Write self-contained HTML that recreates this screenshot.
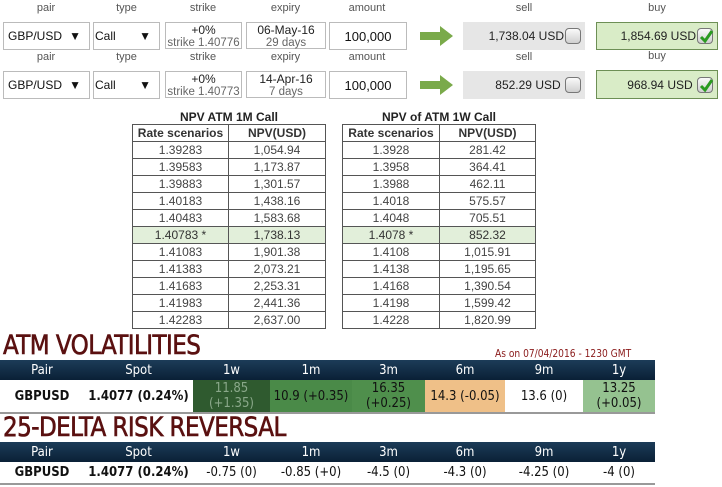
<!DOCTYPE html>
<html><head><meta charset="utf-8"><style>
*{box-sizing:border-box;margin:0;padding:0}
body{width:722px;height:487px;background:#fff;font-family:"Liberation Sans",Arial,sans-serif;position:relative;overflow:hidden;color:#222}
.a{position:absolute}
.lbl{position:absolute;font-size:11px;color:#555;text-align:center}
.box{position:absolute;border:1px solid #bbb;background:#fff;font-size:12px}
.sel{display:flex;align-items:center;justify-content:space-between;padding:0 8px 0 4px;color:#111}
.two{text-align:center;font-size:12px;line-height:12px;padding-top:1px;color:#222;white-space:nowrap}
.two span{color:#666;font-size:11.5px}
.amt{display:flex;align-items:center;justify-content:center;font-size:13px;color:#111}
.sell{position:absolute;background:#e6e6e6;font-size:12px;color:#222;display:flex;align-items:center;justify-content:flex-end;padding-right:4px}
.buy{position:absolute;background:#d9ecc7;border:1px solid #6d8f55;font-size:12px;color:#222;display:flex;align-items:center;justify-content:flex-end;padding-right:4px}
.cb{display:inline-block;width:16px;height:16px;border:1px solid #777;border-radius:4px;background:linear-gradient(#fafafa,#cfcfcf);margin-left:1px;position:relative}
.arrow{position:absolute;width:34px;height:20px}
table.t{position:absolute;border-collapse:collapse;font-size:12px;color:#444}
table.t td{border:1px solid #555;height:17px;text-align:center;padding:0;line-height:15px}
table.t tr.h td{font-weight:bold;color:#333;font-size:12px}
table.t tr.g td{background:#e2efda;color:#333}
.tt{position:absolute;font-size:12px;font-weight:bold;color:#222;text-align:center}
.big{position:absolute;font-family:"DejaVu Sans Condensed","Liberation Sans Narrow",sans-serif;color:#5a1010;font-size:27px;letter-spacing:-0.6px;line-height:28px;transform:scaleX(0.95);transform-origin:left;-webkit-text-stroke:0.6px #5a1010}
.hdr{position:absolute;left:0;width:655px;height:20px;background:linear-gradient(#1c3c58,#0a2036);}
.hdr div,.row div{position:absolute;top:0;height:100%;display:flex;align-items:center;justify-content:center;text-align:center;font-family:"DejaVu Sans Condensed","Liberation Sans Narrow",sans-serif;font-size:13px}
.hdr div{color:#fff}
.row{position:absolute;left:0;width:655px;border-bottom:2px solid #999;}
.row div{color:#111;line-height:15px}
</style></head><body>

<div class="lbl" style="left:3px;top:2px;width:86px">pair</div>
<div class="lbl" style="left:93px;top:2px;width:67px">type</div>
<div class="lbl" style="left:165px;top:2px;width:76px">strike</div>
<div class="lbl" style="left:246px;top:2px;width:79px">expiry</div>
<div class="lbl" style="left:329px;top:2px;width:76px">amount</div>
<div class="lbl" style="left:463px;top:2px;width:122px">sell</div>
<div class="lbl" style="left:596px;top:2px;width:122px">buy</div>

<div class="box sel" style="left:3px;top:22px;width:87px;height:28px"><span>GBP/USD</span><span>▼</span></div>
<div class="box sel" style="left:93px;top:22px;width:67px;height:28px;padding-left:1px"><span>Call</span><span>▼</span></div>
<div class="box two" style="left:165px;top:22px;width:77px;height:27px">+0%<br><span>strike 1.40776</span></div>
<div class="box two" style="left:246px;top:22px;width:80px;height:27px">06-May-16<br><span>29 days</span></div>
<div class="box amt" style="left:329px;top:22px;width:78px;height:28px">100,000</div>
<svg class="arrow" style="left:420px;top:26px" viewBox="0 0 34 20"><path d="M0 6H20V0L33 10L20 20V14H0Z" fill="#7aaa4a"/></svg>
<div class="sell" style="left:463px;top:22px;width:122px;height:28px">1,738.04 USD<span class="cb"></span></div>
<div class="buy" style="left:596px;top:22px;width:122px;height:28px">1,854.69 USD<span class="cb"><svg width="16" height="16" style="position:absolute;left:0;top:0"><path d="M3 8L7 12L14 2" stroke="#2a9a20" stroke-width="3" fill="none"/></svg></span></div>

<div class="lbl" style="left:3px;top:51px;width:86px">pair</div>
<div class="lbl" style="left:93px;top:51px;width:67px">type</div>
<div class="lbl" style="left:165px;top:51px;width:76px">strike</div>
<div class="lbl" style="left:246px;top:51px;width:79px">expiry</div>
<div class="lbl" style="left:329px;top:51px;width:76px">amount</div>
<div class="lbl" style="left:463px;top:51px;width:122px">sell</div>
<div class="lbl" style="left:596px;top:50px;width:122px">buy</div>

<div class="box sel" style="left:3px;top:71px;width:87px;height:28px"><span>GBP/USD</span><span>▼</span></div>
<div class="box sel" style="left:93px;top:71px;width:67px;height:28px;padding-left:1px"><span>Call</span><span>▼</span></div>
<div class="box two" style="left:165px;top:71px;width:77px;height:27px">+0%<br><span>strike 1.40773</span></div>
<div class="box two" style="left:246px;top:71px;width:80px;height:27px">14-Apr-16<br><span>7 days</span></div>
<div class="box amt" style="left:329px;top:71px;width:78px;height:28px">100,000</div>
<svg class="arrow" style="left:420px;top:75px" viewBox="0 0 34 20"><path d="M0 6H20V0L33 10L20 20V14H0Z" fill="#7aaa4a"/></svg>
<div class="sell" style="left:463px;top:71px;width:122px;height:28px">852.29 USD&nbsp;<span class="cb"></span></div>
<div class="buy" style="left:596px;top:70px;width:122px;height:29px">968.94 USD&nbsp;<span class="cb"><svg width="16" height="16" style="position:absolute;left:0;top:0"><path d="M3 8L7 12L14 2" stroke="#2a9a20" stroke-width="3" fill="none"/></svg></span></div>

<div class="tt" style="left:132px;top:110px;width:194px">NPV ATM 1M Call</div>
<div class="tt" style="left:342px;top:110px;width:194px">NPV of ATM 1W Call</div>

<table class="t" style="left:132px;top:124px;width:194px">
<tr class="h"><td style="width:96px">Rate scenarios</td><td>NPV(USD)</td></tr>
<tr><td>1.39283</td><td>1,054.94</td></tr>
<tr><td>1.39583</td><td>1,173.87</td></tr>
<tr><td>1.39883</td><td>1,301.57</td></tr>
<tr><td>1.40183</td><td>1,438.16</td></tr>
<tr><td>1.40483</td><td>1,583.68</td></tr>
<tr class="g"><td>1.40783 *</td><td>1,738.13</td></tr>
<tr><td>1.41083</td><td>1,901.38</td></tr>
<tr><td>1.41383</td><td>2,073.21</td></tr>
<tr><td>1.41683</td><td>2,253.31</td></tr>
<tr><td>1.41983</td><td>2,441.36</td></tr>
<tr><td>1.42283</td><td>2,637.00</td></tr>
</table>
<table class="t" style="left:342px;top:124px;width:194px">
<tr class="h"><td style="width:97px">Rate scenarios</td><td>NPV(USD)</td></tr>
<tr><td>1.3928</td><td>281.42</td></tr>
<tr><td>1.3958</td><td>364.41</td></tr>
<tr><td>1.3988</td><td>462.11</td></tr>
<tr><td>1.4018</td><td>575.57</td></tr>
<tr><td>1.4048</td><td>705.51</td></tr>
<tr class="g"><td>1.4078 *</td><td>852.32</td></tr>
<tr><td>1.4108</td><td>1,015.91</td></tr>
<tr><td>1.4138</td><td>1,195.65</td></tr>
<tr><td>1.4168</td><td>1,390.54</td></tr>
<tr><td>1.4198</td><td>1,599.42</td></tr>
<tr><td>1.4228</td><td>1,820.99</td></tr>
</table>

<div class="big" style="left:3px;top:332px">ATM VOLATILITIES</div>
<div class="a" style="left:495px;top:347px;font-size:11px;color:#8a1a1a;font-family:'DejaVu Sans Condensed',sans-serif;transform:scaleX(0.92);transform-origin:left">As on 07/04/2016 - 1230 GMT</div>
<div class="hdr" style="top:360px">
<div style="left:0;width:84px">Pair</div><div style="left:84px;width:109px">Spot</div>
<div style="left:193px;width:77px">1w</div><div style="left:270px;width:82px">1m</div>
<div style="left:352px;width:73px">3m</div><div style="left:425px;width:80px">6m</div>
<div style="left:505px;width:78px">9m</div><div style="left:583px;width:72px">1y</div>
</div>
<div class="row" style="top:380px;height:34px">
<div style="left:0;width:84px;font-weight:bold">GBPUSD</div><div style="left:84px;width:109px;font-weight:bold">1.4077 (0.24%)</div>
<div style="left:193px;width:77px;background:#2f5a2f;color:#8aa88a">11.85<br>(+1.35)</div>
<div style="left:270px;width:82px;background:#4a8a48">10.9 (+0.35)</div>
<div style="left:352px;width:73px;background:#4f8f4c">16.35<br>(+0.25)</div>
<div style="left:425px;width:80px;background:#efc088">14.3 (-0.05)</div>
<div style="left:505px;width:78px">13.6 (0)</div>
<div style="left:583px;width:72px;background:#95c290">13.25<br>(+0.05)</div>
</div>

<div class="big" style="left:3px;top:414px">25-DELTA RISK REVERSAL</div>
<div class="hdr" style="top:442px">
<div style="left:0;width:84px">Pair</div><div style="left:84px;width:109px">Spot</div>
<div style="left:193px;width:77px">1w</div><div style="left:270px;width:82px">1m</div>
<div style="left:352px;width:73px">3m</div><div style="left:425px;width:80px">6m</div>
<div style="left:505px;width:78px">9m</div><div style="left:583px;width:72px">1y</div>
</div>
<div class="row" style="top:462px;height:23px">
<div style="left:0;width:84px;font-weight:bold">GBPUSD</div><div style="left:84px;width:109px;font-weight:bold">1.4077 (0.24%)</div>
<div style="left:193px;width:77px">-0.75 (0)</div><div style="left:270px;width:82px">-0.85 (+0)</div>
<div style="left:352px;width:73px">-4.5 (0)</div><div style="left:425px;width:80px">-4.3 (0)</div>
<div style="left:505px;width:78px">-4.25 (0)</div><div style="left:583px;width:72px">-4 (0)</div>
</div>
</body></html>
